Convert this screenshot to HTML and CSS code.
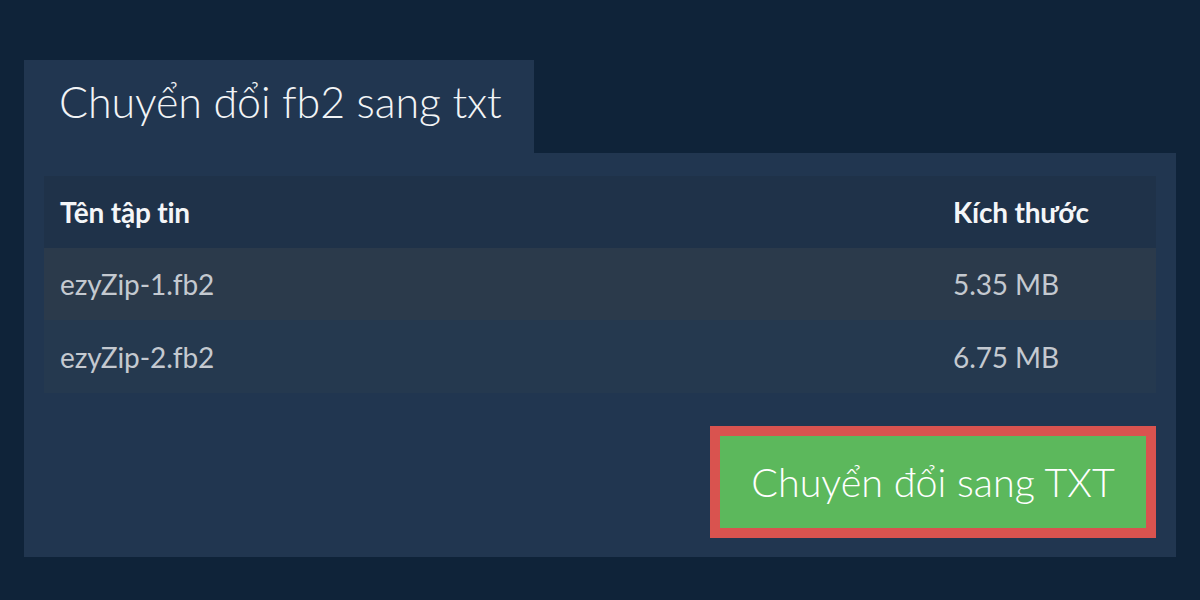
FILE: index.html
```html
<!DOCTYPE html>
<html lang="vi">
<head>
<meta charset="utf-8">
<title>Chuyển đổi fb2 sang txt</title>
<link rel="stylesheet" href="styles.css">
</head>
<body>
<div class="wrap">
  <div class="tab">Chuyển đổi fb2 sang txt</div>
  <div class="panel">
    <table class="files">
      <thead>
        <tr><th class="name">Tên tập tin</th><th class="size">Kích thước</th></tr>
      </thead>
      <tbody>
        <tr class="r1"><td>ezyZip-1.fb2</td><td>5.35 MB</td></tr>
        <tr class="r2"><td>ezyZip-2.fb2</td><td>6.75 MB</td></tr>
      </tbody>
    </table>
    <div class="actions">
      <button class="convert">Chuyển đổi sang TXT</button>
    </div>
  </div>
</div>
</body>
</html>
```
FILE: styles.css
```css
html, body {
  margin: 0;
  padding: 0;
  background: #0f2339;
  font-family: Lato, "Noto Sans", sans-serif;
}
.wrap {
  padding: 60px 24px 0 24px;
}
.tab {
  display: inline-block;
  background: #213650;
  color: #f2f4f6;
  font-size: 43px;
  font-weight: 300;
  height: 93px;
  line-height: 84px;
  padding: 0 35px;
  box-sizing: border-box;
  width: 510px;
  vertical-align: top;
  white-space: nowrap;
  letter-spacing: -0.1px;
}
.panel {
  background: #213650;
  padding: 23px 20px 19px 20px;
}
.files {
  width: 100%;
  border-collapse: collapse;
  font-size: 28px;
}
.files th {
  text-align: left;
  color: #f4f6f8;
  font-weight: 700;
  height: 72px;
  padding: 0 16px;
  background: #1f3249;
  letter-spacing: -0.2px;
}
.files th.size { width: 187px; }
.files td {
  color: #c4c9d0;
  height: 72px;
  padding: 0 16px;
  letter-spacing: -0.1px;
}
.r1 td { background: #2b3a4b; }
.r2 td { background: #25394f; height: 73px; }
.actions {
  display: flex;
  justify-content: flex-end;
  margin-top: 33px;
}
.convert {
  background: #5cb85c;
  border: 10px solid #d9534f;
  color: #ffffff;
  font-family: Lato, "Noto Sans", sans-serif;
  font-size: 39.5px;
  font-weight: 300;
  height: 112px;
  width: 446px;
  padding: 0;
  line-height: 1;
  cursor: pointer;
}
```
